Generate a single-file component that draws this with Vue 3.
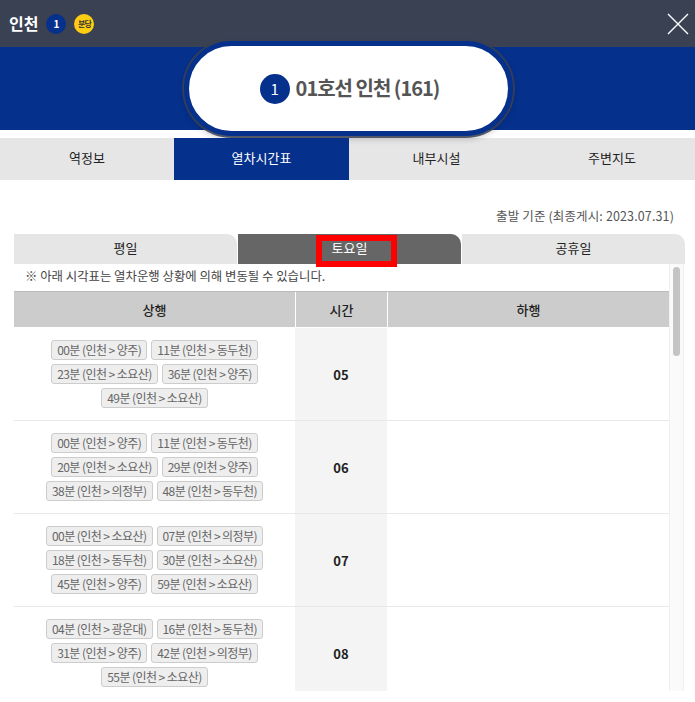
<template>
  <div class="popup">
    <header class="top">
      <div class="top-title">
        <strong>인천</strong>
        <span class="line-dot">1</span>
        <span class="line-dot yellow">분당</span>
      </div>
      <svg class="close" width="22" height="22" viewBox="0 0 22 22" aria-label="닫기">
        <path d="M1 1L21 21M21 1L1 21" stroke="#fff" stroke-width="1.4" fill="none" />
      </svg>
    </header>

    <div class="station-band">
      <div class="station-pill">
        <span class="pill-num">1</span>
        <span class="pill-name">01호선 인천 (161)</span>
      </div>
    </div>

    <nav class="main-tabs">
      <a
        v-for="tab in mainTabs"
        :key="tab"
        class="main-tab"
        :class="{ active: tab === '열차시간표' }"
      >{{ tab }}</a>
    </nav>

    <p class="basis">출발 기준 (최종게시: 2023.07.31)</p>

    <div class="day-tabs">
      <a
        v-for="day in dayTabs"
        :key="day"
        class="day-tab"
        :class="{ active: day === '토요일' }"
      >{{ day }}</a>
      <span class="highlight"></span>
    </div>

    <div class="table-wrap">
      <div class="scroller">
        <p class="notice">※ 아래 시각표는 열차운행 상황에 의해 변동될 수 있습니다.</p>
        <div class="grid-head">
          <div>상행</div>
          <div>시간</div>
          <div>하행</div>
        </div>
        <div v-for="row in rows" :key="row.hour" class="row">
          <div class="times">
            <span v-for="t in row.up" :key="t" class="time-chip">{{ t }}</span>
          </div>
          <div class="hour">{{ row.hour }}</div>
          <div class="times"></div>
        </div>
      </div>
      <!-- scrollbar is hidden in headless, so it is drawn by hand -->
      <div class="track"><div class="thumb"></div></div>
    </div>
  </div>
</template>

<script setup>
const mainTabs = ["역정보", "열차시간표", "내부시설", "주변지도"]
const dayTabs = ["평일", "토요일", "공휴일"]

const rows = [
  {
    hour: "05",
    up: [
      "00분 (인천 > 양주)",
      "11분 (인천 > 동두천)",
      "23분 (인천 > 소요산)",
      "36분 (인천 > 양주)",
      "49분 (인천 > 소요산)",
    ],
  },
  {
    hour: "06",
    up: [
      "00분 (인천 > 양주)",
      "11분 (인천 > 동두천)",
      "20분 (인천 > 소요산)",
      "29분 (인천 > 양주)",
      "38분 (인천 > 의정부)",
      "48분 (인천 > 동두천)",
    ],
  },
  {
    hour: "07",
    up: [
      "00분 (인천 > 소요산)",
      "07분 (인천 > 의정부)",
      "18분 (인천 > 동두천)",
      "30분 (인천 > 소요산)",
      "45분 (인천 > 양주)",
      "59분 (인천 > 소요산)",
    ],
  },
  {
    hour: "08",
    up: [
      "04분 (인천 > 광운대)",
      "16분 (인천 > 동두천)",
      "31분 (인천 > 양주)",
      "42분 (인천 > 의정부)",
      "55분 (인천 > 소요산)",
    ],
  },
]
</script>

<style>
html,
body {
  margin: 0;
  background: #fff;
  overflow: hidden;
}
</style>

<style scoped>
.popup {
  width: 695px;
  height: 702px;
  overflow: hidden;
  background: #fff;
  font-family: "Noto Sans CJK KR", "Noto Sans", sans-serif;
  color: #222;
}

.top {
  height: 47px;
  background: #394153;
  display: flex;
  align-items: center;
  justify-content: space-between;
  padding: 0 6px 0 9px;
}

.top-title {
  display: flex;
  align-items: center;
  gap: 8px;
  color: #fff;
  font-size: 16px;
}

.top-title strong {
  font-weight: 700;
  padding-bottom: 2px;
}

.line-dot {
  width: 20px;
  height: 20px;
  border-radius: 50%;
  background: #05308c;
  color: #fff;
  font-size: 10px;
  font-weight: 700;
  display: flex;
  align-items: center;
  justify-content: center;
}

.line-dot.yellow {
  background: #ffcd12;
  color: #333;
  font-size: 8px;
  letter-spacing: -1px;
}

.station-band {
  height: 83px;
  background: #05308c;
  margin-bottom: 8px;
  display: flex;
  justify-content: center;
  align-items: flex-start;
}

.station-pill {
  box-sizing: border-box;
  width: 329px;
  height: 95px;
  margin-top: -6px;
  margin-left: 2px;
  border-radius: 48px;
  background: #fff;
  border: 5px solid #05308c;
  box-shadow: 0 0 0 2px rgba(57, 65, 83, 0.85), 0 3px 6px rgba(0, 0, 0, 0.2);
  display: flex;
  align-items: center;
  justify-content: center;
  gap: 6px;
  flex-shrink: 0;
  padding-left: 2px;
}

.pill-num {
  width: 30px;
  height: 30px;
  border-radius: 50%;
  background: #05308c;
  color: #fff;
  font-size: 15px;
  display: flex;
  align-items: center;
  justify-content: center;
}

.pill-name {
  font-size: 20px;
  font-weight: 700;
  color: #555;
  letter-spacing: -1px;
  padding-bottom: 2px;
}

.main-tabs {
  display: grid;
  grid-template-columns: 174px 175px 175px 176px;
  width: 700px;
  height: 42px;
  background: #e6e6e6;
}

.main-tab {
  display: flex;
  align-items: center;
  justify-content: center;
  padding-bottom: 3px;
  font-size: 13px;
  color: #222;
}

.main-tab.active {
  background: #05308c;
  color: #fff;
}

.basis {
  margin: 26px 21px 0 0;
  height: 19px;
  line-height: 19px;
  text-align: right;
  font-size: 12.5px;
  letter-spacing: 0.13px;
  color: #555;
}

.day-tabs {
  position: relative;
  display: grid;
  grid-template-columns: 223px 223px 223px;
  gap: 1px;
  margin: 9px 10px 0 14px;
  height: 30px;
}

.day-tab {
  display: flex;
  align-items: center;
  justify-content: center;
  padding-bottom: 3px;
  font-size: 13px;
  background: #e6e6e6;
  border-top-right-radius: 10px;
  color: #222;
}

.day-tab.active {
  background: #666;
  color: #fff;
}

.highlight {
  position: absolute;
  left: 302px;
  top: 1px;
  width: 81px;
  height: 32px;
  box-sizing: border-box;
  border: 6px solid #f00;
}

.table-wrap {
  display: flex;
  width: 671px;
  height: 427px;
  margin-left: 14px;
}

.scroller {
  width: 655px;
  overflow: hidden;
}

.track {
  width: 15px;
  background: #fafafa;
  border-left: 1px solid #f0f0f0;
  border-right: 1px solid #f0f0f0;
  box-sizing: border-box;
  padding: 3px 3px 0;
}

.thumb {
  height: 89px;
  background: #c4c4c4;
  border-radius: 4px;
}

.notice {
  margin: 0;
  height: 27px;
  line-height: 24px;
  padding-left: 11px;
  font-size: 12.4px;
  color: #444;
}

.grid-head,
.row {
  display: grid;
  grid-template-columns: 281px 92px 1fr;
}

.grid-head {
  height: 37px;
  background: #ccc;
  box-sizing: border-box;
  border-top: 1px solid #bbb;
  border-bottom: 1px solid #fff;
  font-size: 13px;
  font-weight: 500;
}

.grid-head > div {
  display: flex;
  align-items: center;
  justify-content: center;
}

.grid-head > div + div {
  border-left: 1px solid #fff;
}

.row {
  height: 93px;
  box-sizing: border-box;
  border-bottom: 1px solid #e8e8e8;
}

.times {
  display: flex;
  flex-wrap: wrap;
  justify-content: center;
  align-content: flex-start;
  gap: 4px;
  padding: 12px 10px 0;
}

.time-chip {
  box-sizing: border-box;
  height: 20px;
  line-height: 17px;
  padding: 0 5px;
  border: 1px solid #ccc;
  border-radius: 3px;
  background: #eee;
  font-size: 12px;
  color: #666;
  letter-spacing: -0.56px;
  white-space: nowrap;
}

.hour {
  background: #f4f4f4;
  display: flex;
  align-items: center;
  justify-content: center;
  font-size: 13px;
  font-weight: 700;
}
</style>
